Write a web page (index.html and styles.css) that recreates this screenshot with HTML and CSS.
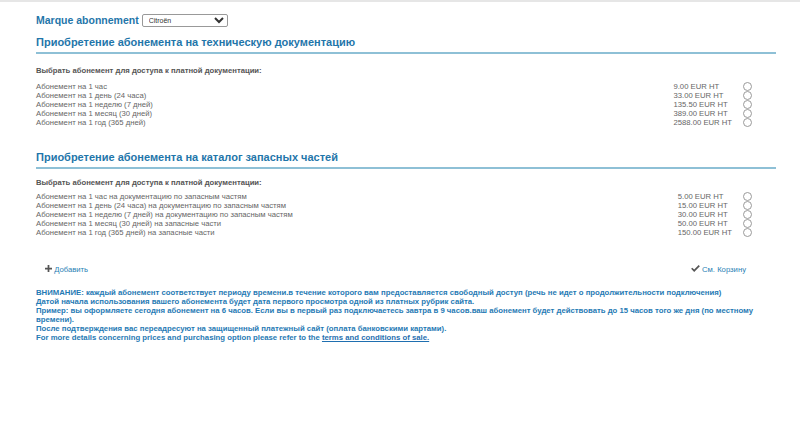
FILE: index.html
```html
<!DOCTYPE html>
<html>
<head>
  <meta charset="UTF-8">
  <title>Marque abonnement</title>
  <link rel="stylesheet" href="styles.css">
</head>
<body>
  <div class="topbar"></div>

  <div class="page">
    <form class="brand">
      <label>Marque abonnement</label>
      <select name="brand">
        <option>Citroën</option>
      </select>
    </form>

    <section class="offer">
      <h2>Приобретение абонемента на техническую документацию</h2>
      <p class="choose">Выбрать абонемент для доступа к платной документации:</p>
      <table class="plans">
        <tr><td>Абонемент на 1 час</td><td class="price">9.00 EUR HT</td><td class="pick"><input type="radio" name="doc"></td></tr>
        <tr><td>Абонемент на 1 день (24 часа)</td><td class="price">33.00 EUR HT</td><td class="pick"><input type="radio" name="doc"></td></tr>
        <tr><td>Абонемент на 1 неделю (7 дней)</td><td class="price">135.50 EUR HT</td><td class="pick"><input type="radio" name="doc"></td></tr>
        <tr><td>Абонемент на 1 месяц (30 дней)</td><td class="price">389.00 EUR HT</td><td class="pick"><input type="radio" name="doc"></td></tr>
        <tr><td>Абонемент на 1 год (365 дней)</td><td class="price">2588.00 EUR HT</td><td class="pick"><input type="radio" name="doc"></td></tr>
      </table>
    </section>

    <section class="offer">
      <h2>Приобретение абонемента на каталог запасных частей</h2>
      <p class="choose">Выбрать абонемент для доступа к платной документации:</p>
      <table class="plans">
        <tr><td>Абонемент на 1 час на документацию по запасным частям</td><td class="price">5.00 EUR HT</td><td class="pick"><input type="radio" name="parts"></td></tr>
        <tr><td>Абонемент на 1 день (24 часа) на документацию по запасным частям</td><td class="price">15.00 EUR HT</td><td class="pick"><input type="radio" name="parts"></td></tr>
        <tr><td>Абонемент на 1 неделю (7 дней) на документацию по запасным частям</td><td class="price">30.00 EUR HT</td><td class="pick"><input type="radio" name="parts"></td></tr>
        <tr><td>Абонемент на 1 месяц (30 дней) на запасные части</td><td class="price">50.00 EUR HT</td><td class="pick"><input type="radio" name="parts"></td></tr>
        <tr><td>Абонемент на 1 год (365 дней) на запасные части</td><td class="price">150.00 EUR HT</td><td class="pick"><input type="radio" name="parts"></td></tr>
      </table>
    </section>

    <div class="actions">
      <a class="action" href="#">
        <svg viewBox="0 0 8 8" width="7" height="7"><path d="M3 0h2v3h3v2H5v3H3V5H0V3h3z" fill="#555"/></svg>
        Добавить
      </a>
      <a class="action" href="#">
        <svg viewBox="0 0 10 8" width="9" height="7"><path d="M0 4.3l1.3-1.3 2.2 2.1L8.6 0 10 1.4 3.5 8z" fill="#555"/></svg>
        См. Корзину
      </a>
    </div>

    <div class="notice">
      <p>ВНИМАНИЕ: каждый абонемент соответствует периоду времени.в течение которого вам предоставляется свободный доступ (речь не идет о продолжительности подключения)</p>
      <p>Датой начала использования вашего абонемента будет дата первого просмотра одной из платных рубрик сайта.</p>
      <p>Пример: вы оформляете сегодня абонемент на 6 часов. Если вы в первый раз подключаетесь завтра в 9 часов.ваш абонемент будет действовать до 15 часов того же дня (по местному времени).</p>
      <p>После подтверждения вас переадресуют на защищенный платежный сайт (оплата банковскими картами).</p>
      <p>For more details concerning prices and purchasing option please refer to the <a href="#">terms and conditions of sale.</a></p>
    </div>
  </div>
</body>
</html>
```

FILE: styles.css
```css
:root {
  font: 7.7px/1.15 "Liberation Sans", Arial, sans-serif;
  color: #666;
  background: #fff;
}

body {
  margin: 0;
}

.topbar {
  height: 2px;
  background: #e6e6e6;
}

.page {
  padding: 12px 24px 0 36px;
}

.brand {
  display: flex;
  align-items: center;
  gap: 3px;
  font-size: 10.5px;
  font-weight: 700;
  color: #1f76aa;
}

  .brand select {
    width: 86px;
    height: 13px;
    padding: 0 2px;
    font: 7px "Liberation Sans", Arial, sans-serif;
    color: #333;
    border: 1px solid #999;
    border-radius: 2px;
    background: #fff;
  }

.offer h2 {
  margin: 9px 0 0;
  padding-bottom: 3px;
  font-size: 11px;
  font-weight: 700;
  color: #1f76aa;
  border-bottom: 2px solid #8ec0d6;
}

.choose {
  margin: 13px 0 6.5px;
  font-weight: 700;
  color: #555;
}

.offer + .offer {
  margin-top: 24px;
}

  .offer + .offer .choose {
    margin: 10px 0 5px;
  }

.plans {
  width: calc(100% - 24px);
  border-collapse: collapse;
}

  .plans td {
    padding: 0;
    height: 9px;
    line-height: 9px;
  }

  .plans .price {
    width: 1px;
    white-space: nowrap;
  }

  .plans .pick {
    width: 20px;
    text-align: right;
  }

  .plans input {
    margin: 0;
    box-sizing: border-box;
    width: 9px;
    height: 9px;
    vertical-align: top;
    appearance: none;
    border: 1px solid #9a9a9a;
    border-radius: 50%;
    background: #fff;
  }

.actions {
  display: flex;
  justify-content: space-between;
  padding: 28px 30px 0 9px;
}

  .action {
    color: #2a7fb5;
    text-decoration: none;
  }

.notice {
  margin-top: 13px;
  font-size: 7.76px;
  font-weight: 700;
  color: #1f7ab4;
}

  .notice p {
    margin: 0;
    line-height: 9px;
  }

  .notice a {
    color: #1f6fb0;
  }
```
